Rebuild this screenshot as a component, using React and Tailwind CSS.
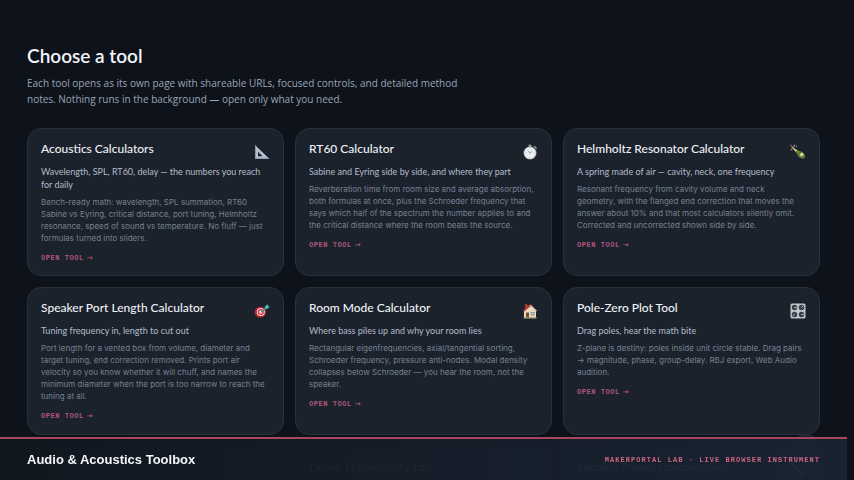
function SetSquare() {
  return (
    <svg viewBox="0 0 16 16" className="size-4" aria-hidden="true">
      <path d="M1 1v14h14.500z" fill="#b4bfce" />
      <path d="M4 7.800v4.400h4.600z" fill="#1d2430" />
      <path d="M1 15h14.500l-1-1H2V2L1 1z" fill="#8d99ab" />
    </svg>
  );
}

function Stopwatch() {
  return (
    <svg viewBox="0 0 16 16" className="size-4" aria-hidden="true">
      <rect x="6.500" y="0.500" width="3" height="2.500" rx="0.800" fill="#8b8f96" />
      <path d="M12.500 2.500l1.600 1.600" stroke="#8b8f96" strokeWidth="1.600" strokeLinecap="round" />
      <circle cx="8" cy="9" r="6.500" fill="#b4b8bd" />
      <circle cx="8" cy="9" r="5.700" fill="#eceef0" />
      <path d="M8 9L6 7M8 9l2-1.500" stroke="#8b9098" strokeWidth="0.800" strokeLinecap="round" />
      <path d="M8 4.200v1M8 12.800v1M3.200 9h1M11.800 9h1" stroke="#b0b4ba" strokeWidth="0.600" />
    </svg>
  );
}

function Bottle() {
  return (
    <svg viewBox="0 0 16 16" className="size-4" aria-hidden="true">
      <path d="M5.500 5.400l2.500.8 3.600 1.600c2 .9 3.600 2.800 3.600 4.500-.1 1.500-1.300 2.500-2.700 2.300-2.200-.3-4.300-1.500-5-3.800L5.800 8.300 3.900 6.500z" fill="#5f7f35" />
      <path d="M9.800 10.300l2.500-1.700 1.500 2.200-2.600 1.900z" fill="#e3dcae" />
      <path d="M3.200 3.600l4 2.700-1.100 1.500-3.400-3z" fill="#d3c68f" />
      <circle cx="2.700" cy="3.500" r="1.200" fill="#a98762" />
      <path d="M1 5.800l1-.5M4.500 1l-.3 1.200M.800 1.300l.7.600M6 2.600l.8-.6" stroke="#d8d5c4" strokeWidth="0.800" strokeLinecap="round" />
    </svg>
  );
}

function Target() {
  return (
    <svg viewBox="0 0 16 16" className="size-4" aria-hidden="true">
      <ellipse cx="6.300" cy="9.200" rx="5.700" ry="5.400" fill="#c9202e" />
      <circle cx="6.800" cy="9" r="4" fill="#f0dcdc" />
      <circle cx="6.800" cy="9" r="3" fill="#cf2f3b" />
      <circle cx="6.800" cy="9" r="1.700" fill="#f3e4e4" />
      <path d="M7 9l5.500-4.200" stroke="#2f8f96" strokeWidth="1.300" />
      <path d="M10.500 6l.6-2.800 2.800-1.900.2 1.800 1.600.7-2.500 2.300z" fill="#55b3b5" />
    </svg>
  );
}

function House() {
  return (
    <svg viewBox="0 0 16 16" className="size-4" aria-hidden="true">
      <rect x="3" y="1" width="2.400" height="4" fill="#a63b32" />
      <path d="M2 7.500L8.500 2l5.500 5.500V15H2z" fill="#ead9bd" />
      <path d="M1 8L5.500 2.200 9 1.500 8.500 3.300 2 8.800z" fill="#b7382f" />
      <path d="M8.500 1.600l6.500 6.200-.9.700-6-5.400z" fill="#cfc3ae" />
      <rect x="4" y="9.500" width="3" height="5.500" fill="#7d4a35" />
      <rect x="8.800" y="9" width="3.800" height="3.400" fill="#6f8797" />
      <path d="M10.700 9v3.400M8.800 10.700h3.800" stroke="#eee6d8" strokeWidth="0.600" />
      <path d="M1.500 14.200h13V15.500h-13z" fill="#a89a78" />
    </svg>
  );
}

function Knobs() {
  return (
    <svg viewBox="0 0 16 16" className="size-4" aria-hidden="true">
      <rect x="0.500" y="0.500" width="15" height="15" rx="1.500" fill="#bfc4cb" />
      <g fill="#3b4048">
        <circle cx="4.500" cy="4.500" r="2.700" />
        <circle cx="11.500" cy="4.500" r="2.700" />
        <circle cx="4.500" cy="11.500" r="2.700" />
        <circle cx="11.500" cy="11.500" r="2.700" />
      </g>
      <path d="M4.500 4.500h2M11.500 4.500l1.500-1.500M4.500 11.500l-1.500 1M11.500 11.500h2" stroke="#d9dce1" strokeWidth="0.900" />
    </svg>
  );
}

function Cone() {
  return (
    <svg viewBox="0 0 16 16" className="size-4" aria-hidden="true">
      <path d="M3 6h2l4-3v10l-4-3H3z" fill="#5d6673" />
    </svg>
  );
}

function Bolt() {
  return (
    <svg viewBox="0 0 16 16" className="size-4" aria-hidden="true">
      <path d="M10 2L5 9h3L7 14l5-7H9z" fill="#a98f45" />
    </svg>
  );
}

function Thermometer() {
  return (
    <svg viewBox="0 0 16 16" className="size-4" aria-hidden="true">
      <path d="M2 2l10 10" stroke="#c3cad4" strokeWidth="2.500" strokeLinecap="round" />
      <circle cx="12.500" cy="12.500" r="2.500" fill="#c65a5a" />
    </svg>
  );
}

const tools = [
  {
    title: "Acoustics Calculators",
    icon: SetSquare,
    tagline: "Wavelength, SPL, RT60, delay — the numbers you reach\nfor daily",
    text: "Bench-ready math: wavelength, SPL summation, RT60\nSabine vs Eyring, critical distance, port tuning, Helmholtz\nresonance, speed of sound vs temperature. No fluff — just\nformulas turned into sliders.",
  },
  {
    title: "RT60 Calculator",
    icon: Stopwatch,
    tagline: "Sabine and Eyring side by side, and where they part",
    text: "Reverberation time from room size and average absorption,\nboth formulas at once, plus the Schroeder frequency that\nsays which half of the spectrum the number applies to and\nthe critical distance where the room beats the source.",
  },
  {
    title: "Helmholtz Resonator Calculator",
    icon: Bottle,
    tagline: "A spring made of air — cavity, neck, one frequency",
    text: "Resonant frequency from cavity volume and neck\ngeometry, with the flanged end correction that moves the\nanswer about 10% and that most calculators silently omit.\nCorrected and uncorrected shown side by side.",
  },
  {
    title: "Speaker Port Length Calculator",
    icon: Target,
    tagline: "Tuning frequency in, length to cut out",
    text: "Port length for a vented box from volume, diameter and\ntarget tuning, end correction removed. Prints port air\nvelocity so you know whether it will chuff, and names the\nminimum diameter when the port is too narrow to reach the\ntuning at all.",
  },
  {
    title: "Room Mode Calculator",
    icon: House,
    tagline: "Where bass piles up and why your room lies",
    text: "Rectangular eigenfrequencies, axial/tangential sorting,\nSchroeder frequency, pressure anti-nodes. Modal density\ncollapses below Schroeder — you hear the room, not the\nspeaker.",
  },
  {
    title: "Pole-Zero Plot Tool",
    icon: Knobs,
    tagline: "Drag poles, hear the math bite",
    text: "Z-plane is destiny: poles inside unit circle stable. Drag pairs\n→ magnitude, phase, group-delay. RBJ export, Web Audio\naudition.",
  },
];

const upcoming = [
  { title: "", icon: Cone },
  { title: "Driver Nonlinearity Lab", icon: Bolt },
  { title: "Speaker Power Compression", icon: Thermometer },
];

function CardHeader({ title, icon: Icon }) {
  return (
    <div className="flex h-[18px] items-start justify-between">
      <h2 className='font-["Lato",sans-serif] text-[12px] leading-[14px] font-medium whitespace-nowrap text-[#eef1f6]'>
        {title}
      </h2>
      <span className="pt-[2px]">
        <Icon />
      </span>
    </div>
  );
}

function ToolCard({ title, icon, tagline, text }) {
  return (
    <a href="#" className="block rounded-[14px] border border-[#28313b] bg-[#1b222c] px-[13px] pt-[13px] pb-[11px]">
      <CardHeader title={title} icon={icon} />
      <p className='mt-[5px] font-["Lato",sans-serif] text-[9px] leading-[13px] whitespace-pre text-[#b2bcca]'>{tagline}</p>
      <p className="mt-[5px] text-[8px] leading-[12px] whitespace-pre text-[#768191]">{text}</p>
      <p className='mt-[9px] font-["Liberation_Mono",monospace] text-[7px] leading-[11px] font-bold tracking-[0.08em] text-[#b0567c]'>
        OPEN TOOL<span className='ml-[3px] font-["DejaVu_Sans",sans-serif]'>→</span>
      </p>
    </a>
  );
}

export default function App() {
  return (
    <div className='h-screen overflow-hidden bg-[#0e121b] pr-[7px] font-["Inter","Noto_Sans",sans-serif]'>
      <main className="px-[27px] pt-[45px]">
        <h1 className='font-["Lato",sans-serif] text-[19px] leading-[22px] font-semibold text-[#f1f4f9]'>Choose a tool</h1>
        <p className='mt-2 font-["Open_Sans",sans-serif] text-[10px] leading-4 whitespace-pre-line text-[#9aa5b5]'>
          {"Each tool opens as its own page with shareable URLs, focused controls, and detailed method\nnotes. Nothing runs in the background — open only what you need."}
        </p>
        <div className="mt-[21px] grid auto-rows-fr grid-cols-3 gap-[11px]">
          {tools.map((tool) => (
            <ToolCard key={tool.title} {...tool} />
          ))}
          {upcoming.map((tool) => (
            <div key={tool.title} className="rounded-[14px] border border-[#28313b] bg-[#1b222c] p-[13px]">
              <CardHeader {...tool} />
            </div>
          ))}
        </div>
      </main>
      <button
        type="button"
        aria-label="Back to top"
        className="fixed right-[34px] bottom-[18px] size-7 rounded-full border border-[#28313b] bg-[#1b222c] text-[11px] text-[#9aa5b5]"
      >
        ↑
      </button>
      <footer className="fixed right-[7px] bottom-0 left-0 flex h-[43px] items-center justify-between border-t-2 border-[#a8465d] bg-linear-to-r from-[#10171f]/97 to-[#1a2333]/97 px-[27px]">
        <strong className='font-["Liberation_Sans",sans-serif] text-[13px] text-[#f4f6fa]'>Audio &amp; Acoustics Toolbox</strong>
        <span className='pt-[2px] font-["Liberation_Mono",monospace] text-[7px] font-bold tracking-[0.15em] text-[#cf6480]'>
          MAKERPORTAL LAB · LIVE BROWSER INSTRUMENT
        </span>
      </footer>
    </div>
  );
}
